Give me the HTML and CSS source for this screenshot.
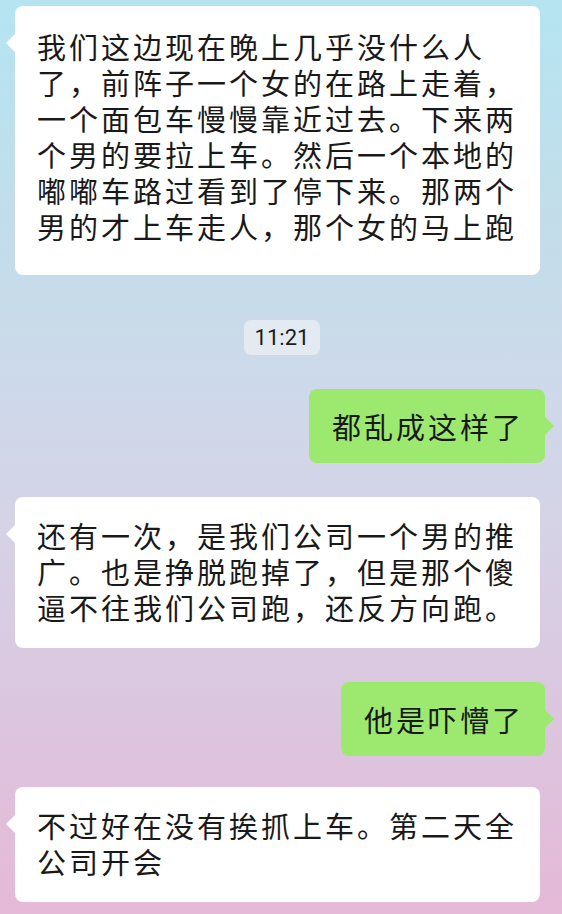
FILE: index.html
```html
<!DOCTYPE html>
<html lang="zh-CN">
<head>
<meta charset="utf-8">
<title>聊天</title>
<link rel="stylesheet" href="styles.css">
</head>
<body>
<main class="chat">
  <div class="row row-left">
    <div class="bubble bubble-in bubble-first">我们这边现在晚上几乎没什么人了，前阵子一个女的在路上走着，一个面包车慢慢靠近过去。下来两个男的要拉上车。然后一个本地的嘟嘟车路过看到了停下来。那两个男的才上车走人，那个女的马上跑</div>
  </div>
  <div class="row row-center">
    <span class="time">11:21</span>
  </div>
  <div class="row row-right">
    <div class="bubble bubble-out">都乱成这样了</div>
  </div>
  <div class="row row-left">
    <div class="bubble bubble-in">还有一次，是我们公司一个男的推广。也是挣脱跑掉了，但是那个傻逼不往我们公司跑，还反方向跑。</div>
  </div>
  <div class="row row-right">
    <div class="bubble bubble-out">他是吓懵了</div>
  </div>
  <div class="row row-left row-last">
    <div class="bubble bubble-in">不过好在没有挨抓上车。第二天全公司开会</div>
  </div>
</main>
</body>
</html>
```
FILE: styles.css
```css
html, body {
  margin: 0;
  padding: 0;
}

body {
  width: 562px;
  height: 914px;
  overflow: hidden;
  background: linear-gradient(180deg,
    #b5e4f1 0%,
    #c3dde9 25%,
    #cdd9ea 42%,
    #d5d3e6 57%,
    #dbc7e0 76%,
    #e5b9d8 100%);
  font-family: "Noto Sans CJK SC", "Noto Sans", sans-serif;
  color: #191919;
}

.chat {
  display: flex;
  flex-direction: column;
  gap: 34px;
  padding: 6px 17px 0 15px;
}

.row {
  display: flex;
}

.row-left {
  justify-content: flex-start;
}

.row-right {
  justify-content: flex-end;
}

.row-center {
  justify-content: center;
  margin-top: 11px;
  padding-left: 4px;
}

.row-last {
  margin-top: -3px;
}

.bubble {
  position: relative;
  box-sizing: border-box;
  border-radius: 8px;
  font-size: 29px;
  letter-spacing: 3px;
  line-height: 36px;
}

.bubble-in {
  width: 525px;
  background: #ffffff;
  padding: 20px 18px 23px 22px;
}

.bubble-first {
  padding-top: 22px;
  padding-bottom: 31px;
}

.bubble-out {
  background: #9de96f;
  padding: 19px 21px 19px 23px;
}

.bubble-in::before,
.bubble-out::after {
  content: "";
  position: absolute;
  top: 28px;
  width: 0;
  height: 0;
  border-top: 9px solid transparent;
  border-bottom: 9px solid transparent;
}

.bubble-in::before {
  left: -9px;
  border-right: 9px solid #ffffff;
}

.bubble-out::after {
  right: -9px;
  border-left: 9px solid #9de96f;
}

.time {
  display: inline-block;
  background: #e3eaf1;
  border-radius: 7px;
  padding: 0 11px;
  height: 35px;
  line-height: 35px;
  font-family: Roboto, "Noto Sans", sans-serif;
  font-size: 22px;
  color: #1c1c1c;
}
```
